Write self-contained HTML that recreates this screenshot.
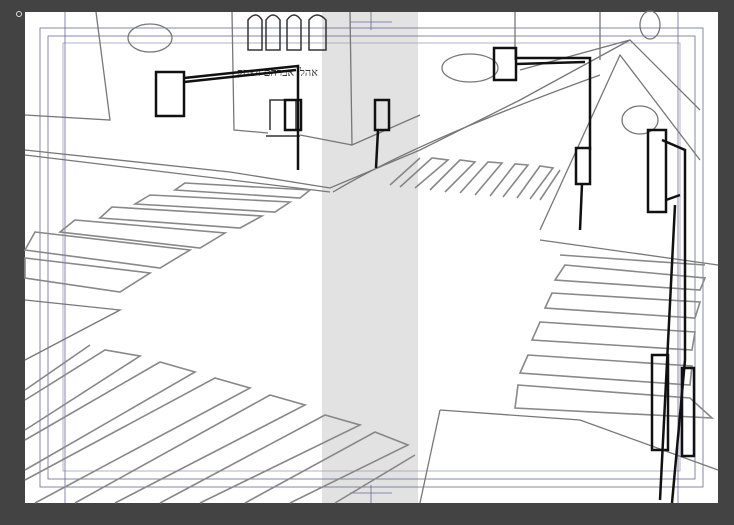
<!DOCTYPE html>
<html><head><meta charset="utf-8"><style>
html,body{margin:0;padding:0;background:#434343;width:734px;height:525px;overflow:hidden}
svg{display:block}
</style></head><body>
<svg width="734" height="525" viewBox="0 0 734 525" xmlns="http://www.w3.org/2000/svg">
<rect x="0" y="0" width="734" height="525" fill="#434343"/>
<rect x="25" y="12" width="693" height="491" fill="#fff"/>
<rect x="322" y="12" width="96" height="491" fill="#e2e2e2"/>
<!-- guide frames -->
<g fill="none" stroke="#6a6a9a" stroke-width="0.8">
<rect x="40" y="28" width="663" height="459"/>
<rect x="48" y="36" width="647" height="443"/>
<rect x="63" y="43" width="617" height="428" stroke="#a0a0c0"/>
<line x1="371" y1="12" x2="371" y2="30"/><line x1="371" y1="485" x2="371" y2="503"/>
<line x1="350" y1="22" x2="392" y2="22"/><line x1="350" y1="493" x2="392" y2="493"/>
<line x1="65" y1="12" x2="65" y2="503"/><line x1="678" y1="12" x2="678" y2="503"/>
</g>
<g fill="none" stroke="#777" stroke-width="1.3">
<!-- left building -->
<path d="M25 115 L110 120 L96 12"/>
<path d="M232 12 L234 130 L268 133"/>
<path d="M350 12 L352 145 L420 115"/>
<path d="M300 135 L352 145"/>
<!-- road edges -->
<path d="M25 150 L230 172 L330 188 L420 150 L520 100 L630 40"/>
<path d="M25 155 L330 192"/>
<path d="M333 192 Q420 140 600 75"/>
<path d="M520 70 L630 40 L700 110"/>
<path d="M540 230 L620 55 L700 160"/>
<path d="M540 240 L718 265"/>
<path d="M25 300 L120 310 L25 360"/>
<path d="M440 410 L420 503"/><path d="M440 410 L580 420 L718 470"/>
<path d="M600 12 L600 60"/><path d="M515 12 L515 60"/>
<ellipse cx="150" cy="38" rx="22" ry="14"/>
<ellipse cx="470" cy="68" rx="28" ry="14"/>
<ellipse cx="640" cy="120" rx="18" ry="14"/>
<ellipse cx="650" cy="25" rx="10" ry="14"/>
</g>
<!-- arches -->
<g fill="none" stroke="#333" stroke-width="1.5">
<path d="M248 50 V20 Q256 10 262 20 V50Z"/>
<path d="M266 50 V20 Q273 10 280 20 V50Z"/>
<path d="M287 50 V20 Q294 10 301 20 V50Z"/>
<path d="M309 50 V20 Q317 10 326 20 V50Z"/>
<path d="M270 130 V100 H296 V130"/><path d="M266 136 H300"/>
</g>
<text x="237" y="76" font-family="Liberation Serif,serif" font-size="11" fill="#333">אהלי אברהם ויצחק</text>
<!-- crosswalk stripes left -->
<g fill="none" stroke="#888" stroke-width="1.6">
<path d="M185 183 L310 190 L300 198 L175 190Z"/>
<path d="M150 195 L290 202 L275 212 L135 204Z"/>
<path d="M112 207 L262 216 L240 228 L100 218Z"/>
<path d="M75 220 L225 233 L200 248 L60 232Z"/>
<path d="M35 232 L190 250 L160 268 L25 250Z"/>
<path d="M25 258 L150 273 L120 292 L25 278Z"/>
<!-- bottom -->
<path d="M90 345 L25 390 M25 400 L105 350 L140 356 L25 430 M25 440 L160 362 L195 372 L25 470 M25 480 L215 378 L250 388 L35 503 M75 503 L270 395 L305 405 L115 503 M160 503 L325 415 L360 425 L200 503 M245 503 L375 432 L408 445 L290 503 M335 503 L415 455"/>
<!-- right top stripes -->
<path d="M390 185 L420 158 M400 187 L432 158 L448 160 L415 188 M430 190 L460 160 L475 162 L445 192 M460 193 L488 162 L502 163 L475 195 M490 196 L515 164 L528 165 L503 197 M517 198 L540 166 L553 168 L530 199 M540 200 L560 170"/>
<!-- right crosswalk -->
<path d="M560 255 L705 265 M565 265 L705 278 L700 290 L555 280 Z"/>
<path d="M552 293 L700 302 L695 318 L545 308Z"/>
<path d="M540 322 L695 332 L692 350 L532 340Z"/>
<path d="M528 355 L692 366 L690 385 L520 373Z"/>
<path d="M518 385 L690 398 L712 418 L515 408Z"/>
</g>
<!-- traffic lights -->
<g fill="none" stroke="#111" stroke-width="2.5">
<rect x="156" y="72" width="28" height="44"/>
<path d="M184 78 L298 66 L298 170"/><path d="M184 82 L296 70"/>
<rect x="285" y="100" width="16" height="30"/>
<rect x="375" y="100" width="14" height="30"/><path d="M378 130 L376 168"/>
<rect x="494" y="48" width="22" height="32"/>
<path d="M516 58 L590 58 L590 150 M516 64 L585 62"/>
<rect x="576" y="148" width="14" height="36"/><path d="M582 184 L580 230"/>
<rect x="648" y="130" width="18" height="82"/>
<path d="M662 140 L685 150 L685 360 M666 200 L680 195"/>
<path d="M675 205 L660 500 M685 360 L672 503"/>
<rect x="652" y="355" width="16" height="95"/>
<rect x="682" y="368" width="12" height="88"/>
</g>
<circle cx="19" cy="14" r="2.5" fill="none" stroke="#ddd"/>
</svg>
</body></html>
